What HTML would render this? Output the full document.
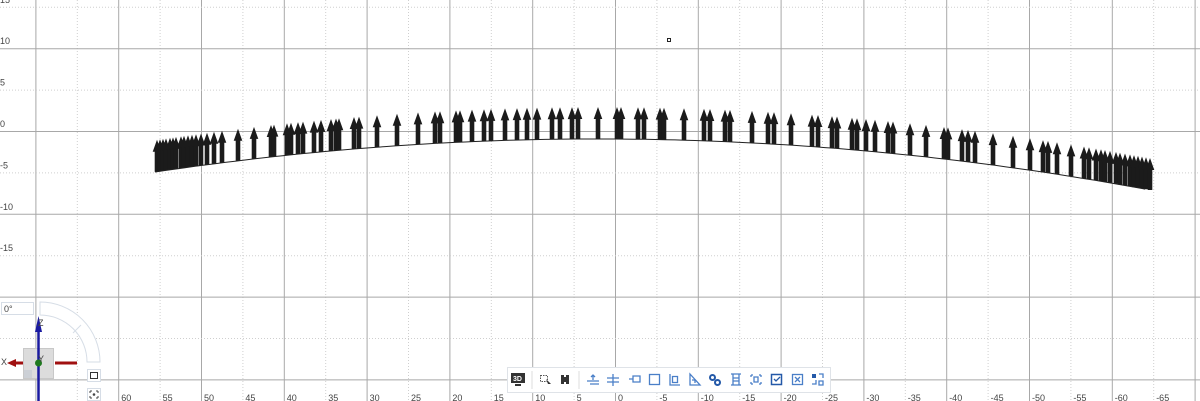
<!DOCTYPE html>
<html><head><meta charset="utf-8">
<style>
html,body{margin:0;padding:0;background:#fff;overflow:hidden}
body{width:1200px;height:401px;position:relative;font-family:"Liberation Sans","DejaVu Sans",sans-serif}
svg{position:absolute;left:0;top:0}
.lbl{font-size:9px;fill:#444}
</style></head><body>
<svg id="s" width="1200" height="401" viewBox="0 0 1200 401">
<g id="grid"></g>
<g id="arrows" fill="#1b1b1b"></g>
<rect x="667.5" y="38.5" width="3" height="3" fill="none" stroke="#222" stroke-width="1"/>
<rect x="1.5" y="302.5" width="32" height="12" fill="#fff" stroke="#d6dde6"/>
<text x="4" y="312" class="lbl" font-size="8">0°</text>
<path d="M40 302 A60 60 0 0 1 100 362 L87 362 A47 47 0 0 0 40 315 Z" fill="#fff" stroke="#d6dde6" stroke-width="1"/>
<line x1="73" y1="333" x2="81" y2="325" stroke="#d6dde6"/>
<rect x="23.5" y="348.5" width="30" height="30" fill="#dcdcdc" stroke="#c8c8c8"/>
<rect x="24" y="370" width="8" height="8" fill="#ccd0d6"/>
<line x1="38.5" y1="330" x2="38.5" y2="401" stroke="#1a1aa0" stroke-width="2.5"/>
<path d="M38.5 316 L42 332 L35 332 Z" fill="#1a1aa0"/>
<line x1="55" y1="363" x2="77" y2="363" stroke="#a01010" stroke-width="3"/>
<line x1="14" y1="363" x2="23" y2="363" stroke="#a01010" stroke-width="3"/>
<path d="M7 363 L16 359 L16 367 Z" fill="#a01010"/>
<circle cx="38.5" cy="363" r="3.5" fill="#1f7a1f"/>
<text x="38" y="326" class="lbl" font-size="9">Z</text>
<text x="1" y="365" class="lbl" font-size="9">X</text>
<text x="38" y="362" class="lbl" font-size="8">Y</text>
<rect x="87.5" y="369.5" width="13" height="12" fill="#fff" stroke="#d6dde6"/>
<rect x="90.5" y="372.5" width="7" height="6" fill="none" stroke="#333"/>
<rect x="87.5" y="388.5" width="13" height="12" fill="#fff" stroke="#d6dde6"/>
<path d="M90 391h2M96 391h2M90 398h2M96 398h2M90 391v2M98 391v2M90 396v2M98 396v2" stroke="#444" fill="none"/>
<circle cx="94" cy="394.5" r="1.3" fill="#444"/>
<rect x="507.5" y="367.5" width="323" height="25" fill="#fff" stroke="#dfe3e8"/>
<rect x="511" y="373" width="14" height="10" fill="#333"/>
<rect x="515" y="384" width="6" height="2" fill="#333"/>
<text x="513" y="381" font-size="7" fill="#fff" font-weight="bold">3D</text>
<line x1="532" y1="371" x2="532" y2="389" stroke="#ddd"/>
<rect x="540.5" y="375.5" width="7" height="6" fill="none" stroke="#555" stroke-dasharray="1.5 1"/>
<path d="M546 379 L551 384 L548 384 Z" fill="#333"/>
<rect x="561" y="375" width="3" height="9" fill="#333"/><rect x="566" y="375" width="3" height="9" fill="#333"/><rect x="564" y="377" width="2" height="5" fill="#333"/>
<line x1="579" y1="371" x2="579" y2="389" stroke="#ddd"/>
<g stroke="#4a7fc8" fill="none" stroke-width="1.3">
<path d="M587 381h12M590 384h9M593 375v5M591 377l2-2 2 2"/>
<path d="M607 378h12M607 382h12M613 374v12"/>
<path d="M629 379h4M633 376h7v6h-7z"/>
<rect x="649.5" y="374.5" width="10" height="10"/>
<path d="M670 374v11h10M672.5 376.5h5v6h-5z"/>
<path d="M690 374v11h10zM692 380h3v3"/>
<circle cx="712.5" cy="377.5" r="2.5" stroke-width="2" stroke="#2459a8"/><circle cx="717.5" cy="382.5" r="2.5" stroke-width="2" stroke="#2459a8"/>
<path d="M731 374h10M731 385h10M733 374v11M739 374v11M733 378h6M733 381h6"/>
<path d="M751 375h2M759 375h2M751 384h2M759 384h2M751 375v2M761 375v2M751 382v2M761 382v2M754 377h4v5h-4z"/>
<rect x="771.5" y="374.5" width="10" height="10" stroke="#2459a8" stroke-width="1.5"/><path d="M774 379l2 2 4-4" stroke="#2459a8"/>
<rect x="792.5" y="374.5" width="10" height="10"/><path d="M795 377l5 5M800 377l-5 5"/>
<rect x="812" y="374" width="4" height="4" fill="#2459a8" stroke="none"/><path d="M819 374h4v4M812 384h4v-4M819 381h4v4h-4z"/>
</g>
</svg>
<script>
(function(){
var g=document.getElementById('grid'),s='';
var ppu=8.28,x0=615,y0=131;
for(var k=-14;k<=14;k++){var v=k*5,x=x0-v*ppu;if(x<0||x>1200)continue;
 var solid=(v%10===0);
 s+='<line x1="'+(x+.5).toFixed(1)+'" y1="0" x2="'+(x+.5).toFixed(1)+'" y2="401" stroke="'+(solid?'#a8a8a8':'#cfcfcf')+'" '+(solid?'':'stroke-dasharray="1 2"')+'/>';
 if(v<=60&&v>=-65) s+='<text class="lbl" x="'+(x+3).toFixed(1)+'" y="401">'+v+'</text>';}
for(var k=-6;k<=4;k++){var v=k*5,y=y0-v*ppu;if(y<-5||y>401)continue;
 var solid=(v%10===0);
 s+='<line x1="0" y1="'+(y+.5).toFixed(1)+'" x2="1200" y2="'+(y+.5).toFixed(1)+'" stroke="'+(solid?'#a8a8a8':'#cfcfcf')+'" '+(solid?'':'stroke-dasharray="1 2"')+'/>';
 if(y<290) s+='<text class="lbl" x="0" y="'+(y-4).toFixed(1)+'">'+v+'</text>';}
g.innerHTML=s;
var xs=[157,160,163,166,170,173,176,181,184,188,192,196,201,207,214,222,238,254,271,274,287,291,298,303,314,321,331,336,339,354,359,377,397,418,435,440,456,460,472,484,491,505,517,527,537,552,560,572,578,598,617,621,638,644,660,664,684,704,710,725,730,752,768,774,791,812,818,832,837,852,857,866,875,888,893,910,926,944,948,962,968,975,993,1013,1030,1043,1048,1057,1071,1084,1089,1096,1101,1105,1110,1116,1120,1125,1130,1134,1138,1142,1146,1150];
var a='';
function by(x){var d=x-615;return 139+1.679e-4*d*d+0.0055*d;}
for(var i=0;i<xs.length;i++){var x=xs[i],y=by(x);
 a+='<path transform="translate('+x+','+y.toFixed(1)+')" d="M-2.3 0 L-2.3 -20 L-4.3 -20 L0 -32 L4.3 -20 L2.3 -20 L2.3 0 Z"/>';}
var pts=[];for(var x=155;x<=1152;x+=10)pts.push(x+','+by(x).toFixed(1));
a+='<polyline points="'+pts.join(' ')+'" fill="none" stroke="#222" stroke-width="1"/>';
document.getElementById('arrows').innerHTML=a;
})();
</script>
</body></html>
